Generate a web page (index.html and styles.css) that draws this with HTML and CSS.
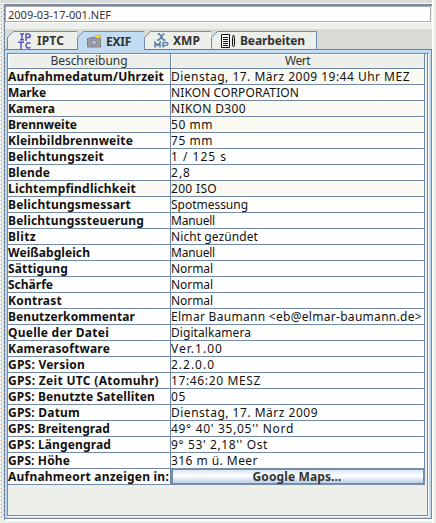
FILE: index.html
```html
<!DOCTYPE html>
<html lang="de">
<head>
<meta charset="utf-8">
<title>Metadaten</title>
<link rel="stylesheet" href="styles.css">
</head>
<body>
<div class="window">
<div class="top"></div>
<div class="divider"></div>
<main class="content">
<div class="field"><span data-w="103">2009-03-17-001.NEF</span></div>
<nav class="tabs">
<div class="tab iptc"><svg class="edge" width="8" height="8"><path class="cut" d="M0 0H7L0 7Z"/><path class="line" d="M.5 7V6.5L6.5.5H8"/></svg><svg class="icon" width="14" height="16" viewBox="0 0 14 16"><g fill="none" stroke="#5a52bd" stroke-width="1.5"><path d="M2 1h4M4 1v6M2 6.7h4M8 8V1h2c3 0 3 3.6 0 3.6H8M0 9.2h6M3 9v7M12.5 10.2C6.500 7.500 6.500 17 12.500 14.500"/></g></svg><b data-w="27">IPTC</b></div>
<div class="tab exif"><svg class="edge" width="8" height="8"><path class="cut" d="M0 0H7L0 7Z"/><path class="line" d="M.5 7V6.5L6.5.5H8"/></svg><svg class="icon" width="14" height="14" viewBox="0 0 14 14"><path d="M.5 4.500h2l1-1h5l1 1h4v8.500H.5z" fill="#9c9c9c" stroke="#808080"/><path d="M8.500 1h5v3h-5z" fill="#f0df22" stroke="#aaa36c" stroke-width=".5"/><circle cx="7" cy="8.500" r="2.500" fill="#b4b9dc" stroke="#7d80a0"/></svg><b data-w="25">EXIF</b></div>
<div class="tab xmp"><svg class="edge" width="8" height="8"><path class="cut" d="M0 0H7L0 7Z"/><path class="line" d="M.5 7V6.5L6.5.5H8"/></svg><svg class="icon" width="15" height="15" viewBox="0 0 15 15"><g fill="none" stroke="#557da7" stroke-width="1.500"><path d="M3.500 1h2l4 6h2M10.500 1h-1L5 7H3M1 14.500V9.500l2.500 3 2.500-3v5M9 14.500v-5h3c3 0 2 3 0 3H9"/></g></svg><b data-w="27">XMP</b></div>
<div class="tab edit"><svg class="edge" width="8" height="8"><path class="cut" d="M0 0H7L0 7Z"/><path class="line" d="M.5 7V6.5L6.5.5H8"/></svg><svg class="icon" width="15" height="14" viewBox="0 0 15 14"><path d="M.5.5h8v13h-8zM2 3.500h5M2 5.500h5M2 7.500h5M2 9.500h5M2 11.500h5" fill="#fff" stroke="#111"/><path d="M11.500 3.500l1-2.500 1 2.500v8l-1 1.500-1-1.500z" fill="#ddd" stroke="#111"/></svg><b data-w="65">Bearbeiten</b></div>
</nav>
<section class="panel"><div class="view">
<div class="table">
<div class="row head"><span><i data-w="77">Beschreibung</i></span><span><i data-w="25">Wert</i></span></div>
<div class="row tint"><b><i data-w="156">Aufnahmedatum/Uhrzeit</i></b><span><i data-w="239">Dienstag, 17. März 2009 19:44 Uhr MEZ</i></span></div>
<div class="row"><b><i data-w="38">Marke</i></b><span><i data-w="128">NIKON CORPORATION</i></span></div>
<div class="row tint"><b><i data-w="47">Kamera</i></b><span><i data-w="75">NIKON D300</i></span></div>
<div class="row tint"><b><i data-w="69">Brennweite</i></b><span><i data-w="42">50 mm</i></span></div>
<div class="row"><b><i data-w="125">Kleinbildbrennweite</i></b><span><i data-w="42">75 mm</i></span></div>
<div class="row"><b><i data-w="96">Belichtungszeit</i></b><span><i data-w="56">1 / 125 s</i></span></div>
<div class="row"><b><i data-w="42">Blende</i></b><span><i data-w="20">2,8</i></span></div>
<div class="row tint"><b><i data-w="128">Lichtempfindlichkeit</i></b><span><i data-w="46">200 ISO</i></span></div>
<div class="row"><b><i data-w="123">Belichtungsmessart</i></b><span><i data-w="77">Spotmessung</i></span></div>
<div class="row"><b><i data-w="136">Belichtungssteuerung</i></b><span><i data-w="44">Manuell</i></span></div>
<div class="row"><b><i data-w="28">Blitz</i></b><span><i data-w="87">Nicht gezündet</i></span></div>
<div class="row"><b><i data-w="82">Weißabgleich</i></b><span><i data-w="44">Manuell</i></span></div>
<div class="row"><b><i data-w="60">Sättigung</i></b><span><i data-w="42">Normal</i></span></div>
<div class="row"><b><i data-w="45">Schärfe</i></b><span><i data-w="42">Normal</i></span></div>
<div class="row"><b><i data-w="54">Kontrast</i></b><span><i data-w="42">Normal</i></span></div>
<div class="row"><b><i data-w="127">Benutzerkommentar</i></b><span><i data-w="251">Elmar Baumann &lt;eb@elmar-baumann.de&gt;</i></span></div>
<div class="row"><b><i data-w="101">Quelle der Datei</i></b><span><i data-w="80">Digitalkamera</i></span></div>
<div class="row"><b><i data-w="102">Kamerasoftware</i></b><span><i data-w="52">Ver.1.00</i></span></div>
<div class="row"><b><i data-w="77">GPS: Version</i></b><span><i data-w="44">2.2.0.0</i></span></div>
<div class="row"><b><i data-w="151">GPS: Zeit UTC (Atomuhr)</i></b><span><i data-w="90">17:46:20 MESZ</i></span></div>
<div class="row"><b><i data-w="147">GPS: Benutzte Satelliten</i></b><span><i data-w="15">05</i></span></div>
<div class="row"><b><i data-w="72">GPS: Datum</i></b><span><i data-w="147">Dienstag, 17. März 2009</i></span></div>
<div class="row"><b><i data-w="102">GPS: Breitengrad</i></b><span><i data-w="123">49° 40' 35,05'' Nord</i></span></div>
<div class="row"><b><i data-w="103">GPS: Längengrad</i></b><span><i data-w="97">9° 53' 2,18'' Ost</i></span></div>
<div class="row"><b><i data-w="62">GPS: Höhe</i></b><span><i data-w="87">316 m ü. Meer</i></span></div>
<div class="row"><b><i data-w="161">Aufnahmeort anzeigen in:</i></b><button><i data-w="89">Google Maps...</i></button></div>
</div>
</div></section>
</main>
</div>
<script src="fit.js"></script>
</body>
</html>
```
FILE: styles.css
```css
* { box-sizing: border-box; }
body {
  margin: 0;
  background: #ecefea;
  font: 12px/15px "Noto Sans", "Open Sans", sans-serif;
  color: #111;
  overflow: hidden;
}
i { font-style: normal; }
[data-w] { display: inline-block; white-space: pre; }
.window {
  width: 436px;
  height: 523px;
  display: grid;
  grid-template: 4px 519px / 4px 428px;
  background: linear-gradient(90deg, transparent 432px, #fff 432px, #fff 434px, transparent 434px);
}
.top {
  grid-column: 1 / 3;
  background: linear-gradient(#d8dcd9 3px, #f8f8f5 3px);
}
.divider {
  height: 514px;
  background:
    radial-gradient(circle at 1.5px .5px, #8a99ad .6px, transparent .8px) 0 0 / 4px 4px,
    radial-gradient(circle at 3.5px 2.5px, #8a99ad .6px, transparent .8px) 0 0 / 4px 4px;
}
.content {
  height: 517px;
  border-left: 1px solid #7389a4;
  border-top: 2px solid #7a8aa5;
  border-bottom: 2px solid #fff;
}
.field {
  height: 16px;
  border: 1px solid #aaa;
  background: #fff;
  width: 426px;
  padding-left: 2px;
  font-size: 11px;
  line-height: 16px;
  color: #333;
}
.tabs {
  height: 28px;
  padding: 9px 0 0 2px;
  display: flex;
  background: linear-gradient(#fff 1px, #ecefea 1px, #ecefea 7px, #d8dad6 7px);
  border-bottom: 1px solid #637fae;
}
.tab {
  position: relative;
  display: flex;
  align-items: center;
  height: 18px;
  border-top: 1px solid #7089af;
  border-left: 1px solid #7089af;
  background: #ecefea;
  color: #333;
}
.tab .icon { flex: none; }
.edge { position: absolute; left: -1px; top: -1px; }
.cut { fill: #d8dad6; }
.line { fill: none; stroke: #7089af; }
.iptc { width: 70px; padding-left: 10px; gap: 5px; }
.exif { width: 67px; padding-left: 9px; gap: 5px; height: 19px; background: #c3dbf1; }
.xmp { width: 67px; padding-left: 9px; gap: 4px; }
.edit { width: 106px; padding-left: 9px; gap: 4px; border-right: 1px solid #7089af; }
.panel {
  height: 469px;
  background: #c3dbf1;
  padding: 3px 3px 3px 2px;
  border-right: 1px solid #7389a4;
  border-bottom: 1px solid #7389a4;
}
.view {
  height: 463px;
  border: 1px solid #7089a6;
  background: #ecefea;
  box-shadow: 1px 1px #fff;
}
.table { width: 417px; }
.row {
  display: grid;
  grid-template-columns: 163px 254px;
  height: 16px;
  background: #fff;
}
.row > * {
  border-right: 1px solid #7089a6;
  border-bottom: 1px solid #7089a6;
  min-width: 0;
  height: 16px;
  line-height: 15px;
  white-space: nowrap;
}
.tint { background: #fafaf2; }
.head { background: #ecefea; text-align: center; color: #333; }
.head, .head > * { height: 15px; }
.head > * { line-height: 14px; box-shadow: inset 1px 1px #fff; }
.row > button {
  display: block;
  height: 17px;
  margin-top: -1px;
  padding: 0 2px 0 0;
  border: 2px solid #778da6;
  background: linear-gradient(#dbe6f2, #fff 45%, #b9cfe3);
  font: bold 12px/11px "Noto Sans", "Open Sans", sans-serif;
  color: #333;
}
```
FILE: fit.js
```js
for (const el of document.querySelectorAll('[data-w]')) {
  const gap = +el.dataset.w - el.getBoundingClientRect().width;
  el.style.letterSpacing = gap / el.textContent.length + 'px';
}
```
